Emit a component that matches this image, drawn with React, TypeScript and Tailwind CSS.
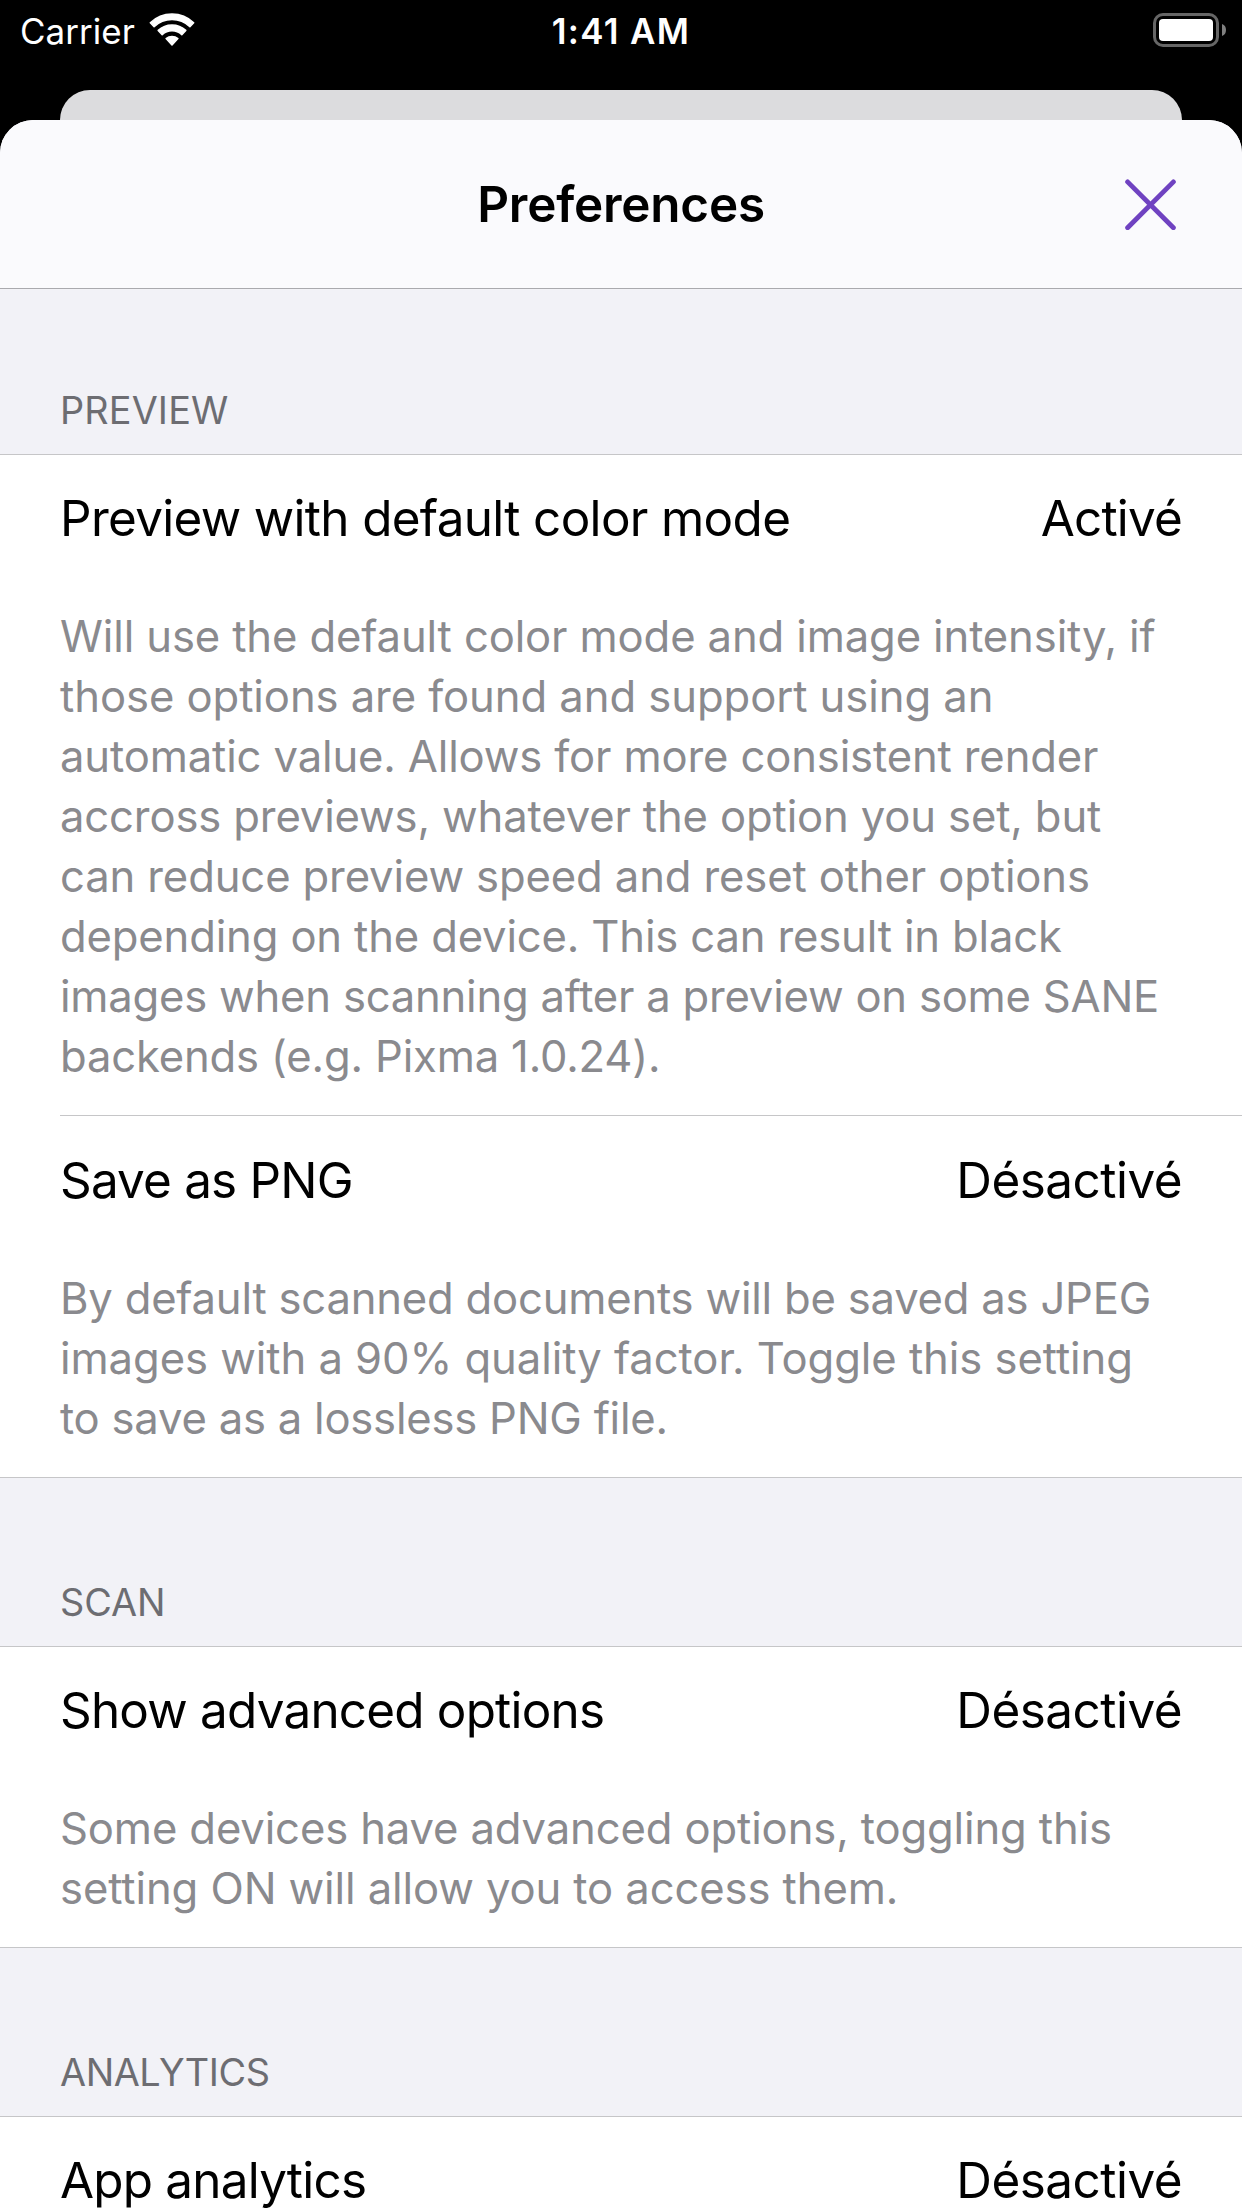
type Line = { text: string; tracking: string };
type Setting = {
  title: string;
  titleTracking: string;
  value: "Activé" | "Désactivé";
  lines: Line[];
};
type Group = { name: string; nameTracking: string; settings: Setting[] };

const groups: Group[] = [
  {
    name: "PREVIEW",
    nameTracking: "tracking-[0.15px]",
    settings: [
      {
        title: "Preview with default color mode",
        titleTracking: "tracking-[-0.66px]",
        value: "Activé",
        lines: [
          { text: "Will use the default color mode and image intensity, if", tracking: "tracking-[-0.13px]" },
          { text: "those options are found and support using an", tracking: "tracking-[-0.07px]" },
          { text: "automatic value. Allows for more consistent render", tracking: "tracking-[-0.14px]" },
          { text: "accross previews, whatever the option you set, but", tracking: "tracking-[-0.14px]" },
          { text: "can reduce preview speed and reset other options", tracking: "tracking-[-0.13px]" },
          { text: "depending on the device. This can result in black", tracking: "tracking-[-0.16px]" },
          { text: "images when scanning after a preview on some SANE", tracking: "tracking-[-0.22px]" },
          { text: "backends (e.g. Pixma 1.0.24).", tracking: "tracking-[-0.17px]" },
        ],
      },
      {
        title: "Save as PNG",
        titleTracking: "tracking-[-0.8px]",
        value: "Désactivé",
        lines: [
          { text: "By default scanned documents will be saved as JPEG", tracking: "tracking-[-0.21px]" },
          { text: "images with a 90% quality factor. Toggle this setting", tracking: "tracking-[-0.06px]" },
          { text: "to save as a lossless PNG file.", tracking: "tracking-[-0.22px]" },
        ],
      },
    ],
  },
  {
    name: "SCAN",
    nameTracking: "tracking-[-0.05px]",
    settings: [
      {
        title: "Show advanced options",
        titleTracking: "tracking-[-0.78px]",
        value: "Désactivé",
        lines: [
          { text: "Some devices have advanced options, toggling this", tracking: "tracking-[-0.13px]" },
          { text: "setting ON will allow you to access them.", tracking: "tracking-[-0.1px]" },
        ],
      },
    ],
  },
  {
    name: "ANALYTICS",
    nameTracking: "tracking-[-0.45px]",
    settings: [
      { title: "App analytics", titleTracking: "tracking-[-0.77px]", value: "Désactivé", lines: [] },
    ],
  },
];

function WifiIcon() {
  return (
    <svg width="46" height="34" viewBox="0 0 46 34" fill="white" stroke="white" strokeWidth="1.5" strokeLinejoin="round">
      <path d="M1.3 9.8A31.2 31.2 0 0 1 44.7 9.8L40.9 13.7A25.8 25.8 0 0 0 5.1 13.7Z" />
      <path d="M9.2 17.4A20.3 20.3 0 0 1 36.8 17.4L32.8 21.7A14.3 14.3 0 0 0 13.2 21.7Z" />
      <path d="M17.1 25.6A9 9 0 0 1 28.9 25.6L23 32Z" />
    </svg>
  );
}

function BatteryIcon() {
  return (
    <svg width="73" height="34" viewBox="0 0 73 34">
      <rect x="1.5" y="1.5" width="63" height="31" rx="8.5" fill="none" stroke="#666" strokeWidth="3" />
      <rect x="6" y="6" width="54" height="22" rx="4" fill="white" />
      <path d="M69 11C71.8 12 73 14.3 73 17S71.8 22 69 23Z" fill="#7f7f7f" />
    </svg>
  );
}

function StatusBar() {
  return (
    <div className="grid h-[90px] grid-cols-3 pt-[9px] pr-4 pl-4 text-[34.9px] leading-[44px] text-white">
      <div className="flex items-start pl-1">
        <span className="tracking-[0.08px]">Carrier</span>
        <span className="mt-1 ml-[14px]">
          <WifiIcon />
        </span>
      </div>
      <div className="text-center font-semibold tracking-[1.34px]">1:41 AM</div>
      <div className="mt-1 flex justify-end">
        <BatteryIcon />
      </div>
    </div>
  );
}

function SettingRow({ setting, first }: { setting: Setting; first: boolean }) {
  return (
    <div className={first ? "pt-[33px] pb-[28px]" : "ml-[60px] border-t border-[#c6c6c8] pt-[34px] pb-[28px]"}>
      <div className={first ? "px-[60px]" : "pr-[60px]"}>
        <div className="flex justify-between text-[49.4px] leading-[60px] whitespace-nowrap text-black">
          <span className={setting.titleTracking}>{setting.title}</span>
          <span className={setting.value === "Activé" ? "tracking-[-0.8px]" : "tracking-[-0.5px]"}>{setting.value}</span>
        </div>
        <p className="mt-[59px] text-[43.6px] leading-[60px] whitespace-nowrap text-[#8a8a8e]">
          {setting.lines.map((line) => (
            <span key={line.text} className={`block ${line.tracking}`}>
              {line.text}{" "}
            </span>
          ))}
        </p>
      </div>
    </div>
  );
}

export default function App() {
  return (
    <div className="h-[2208px] w-[1242px] overflow-hidden bg-black font-['Inter','Liberation_Sans',sans-serif]">
      <StatusBar />
      <div className="mx-[60px] h-[30px] rounded-t-[30px] bg-[#dcdcde]" />
      <div className="overflow-hidden rounded-t-[33px] bg-[#f2f2f7]">
        <header className="grid h-[169px] grid-cols-[1fr_auto_1fr] items-center border-b border-[#a9a9ae] bg-[#fafafd]">
          <h1 className="col-start-2 text-[49.4px] leading-[60px] font-semibold tracking-[-0.2px] text-black">
            Preferences
          </h1>
          <button aria-label="Close" className="mr-[66px] justify-self-end">
            <svg width="51" height="51" viewBox="0 0 51 51" stroke="#6f42c1" strokeWidth="4.8" strokeLinecap="round">
              <path d="M2.6 2.9L48.4 48.7M48.4 2.9L2.6 48.7" />
            </svg>
          </button>
        </header>
        {groups.map((group, i) => (
          <section key={group.name}>
            <div className={`flex items-end pb-[21px] pl-[60px] ${i === 0 ? "h-[165px]" : "h-[168px]"}`}>
              <h2 className={`text-[37.8px] leading-[46px] text-[#6d6d72] ${group.nameTracking}`}>{group.name}</h2>
            </div>
            <div className="border-y border-[#c6c6c8] bg-white">
              {group.settings.map((setting, j) => (
                <SettingRow key={setting.title} setting={setting} first={j === 0} />
              ))}
            </div>
          </section>
        ))}
      </div>
    </div>
  );
}
